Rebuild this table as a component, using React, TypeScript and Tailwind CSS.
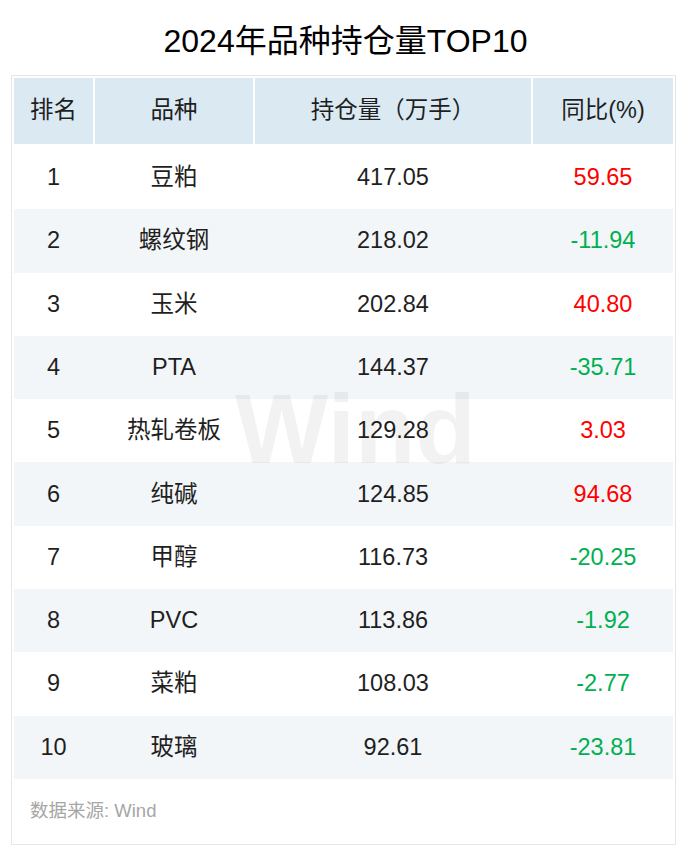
const rows = [
  { rank: 1, name: '豆粕', oi: '417.05', yoy: '59.65' },
  { rank: 2, name: '螺纹钢', oi: '218.02', yoy: '-11.94' },
  { rank: 3, name: '玉米', oi: '202.84', yoy: '40.80' },
  { rank: 4, name: 'PTA', oi: '144.37', yoy: '-35.71' },
  { rank: 5, name: '热轧卷板', oi: '129.28', yoy: '3.03' },
  { rank: 6, name: '纯碱', oi: '124.85', yoy: '94.68' },
  { rank: 7, name: '甲醇', oi: '116.73', yoy: '-20.25' },
  { rank: 8, name: 'PVC', oi: '113.86', yoy: '-1.92' },
  { rank: 9, name: '菜粕', oi: '108.03', yoy: '-2.77' },
  { rank: 10, name: '玻璃', oi: '92.61', yoy: '-23.81' },
];

const font = { fontFamily: '"Liberation Sans", "Noto Sans CJK SC", sans-serif' };

export default function App() {
  return (
    <div className="w-[691px] h-[852px] bg-white text-[#1f1f1f]" style={font}>
      <h1 className="pt-[21px] h-[75px] text-center text-[32px] leading-[40px] font-normal text-black">
        2024年品种持仓量TOP10
      </h1>

      <div className="relative ml-[11px] w-[665px] border border-[#e6e6e6] p-[2px]">
        {/* header */}
        <div className="grid grid-cols-[79px_158px_276px_140px] gap-x-[2px] h-[66px] text-[23.5px]">
          <div className="bg-[#dbeaf2] flex items-center justify-center">排名</div>
          <div className="bg-[#dbeaf2] flex items-center justify-center">品种</div>
          <div className="bg-[#dbeaf2] flex items-center justify-center">持仓量（万手）</div>
          <div className="bg-[#dbeaf2] flex items-center justify-center">同比(%)</div>
        </div>

        <div className="pt-[2px]">
          {rows.map((r, i) => (
            <div
              key={r.rank}
              className={`grid grid-cols-[79px_158px_276px_140px] gap-x-[2px] h-[63.3px] text-[23.5px] ${
                i % 2 === 1 ? 'bg-[#f3f6f8]' : 'bg-white'
              }`}
            >
              <div className="flex items-center justify-center">{r.rank}</div>
              <div className="flex items-center justify-center">{r.name}</div>
              <div className="flex items-center justify-center">{r.oi}</div>
              <div
                className={`flex items-center justify-center ${
                  r.yoy.startsWith('-') ? 'text-[#00b050]' : 'text-[#ff0000]'
                }`}
              >
                {r.yoy}
              </div>
            </div>
          ))}
        </div>

        <div className="h-[63px] flex items-center pl-[16px] text-[18.5px] text-[#a6a6a6]">
          数据来源: Wind
        </div>

        {/* watermark */}
        <div
          aria-hidden="true"
          className="pointer-events-none absolute left-[223px] top-[303px] text-[99px] leading-none font-bold text-black/[0.05] select-none"
        >
          Wind
        </div>
      </div>
    </div>
  );
}
